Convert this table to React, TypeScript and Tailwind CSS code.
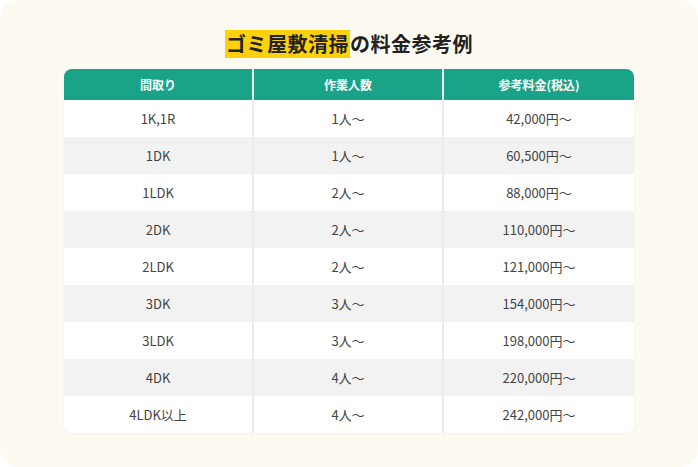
import React from "react";

const rows: [string, string, string][] = [
  ["1K,1R", "1人〜", "42,000円〜"],
  ["1DK", "1人〜", "60,500円〜"],
  ["1LDK", "2人〜", "88,000円〜"],
  ["2DK", "2人〜", "110,000円〜"],
  ["2LDK", "2人〜", "121,000円〜"],
  ["3DK", "3人〜", "154,000円〜"],
  ["3LDK", "3人〜", "198,000円〜"],
  ["4DK", "4人〜", "220,000円〜"],
  ["4LDK以上", "4人〜", "242,000円〜"],
];

export default function App() {
  return (
    <div
      className="w-[698px] h-[467px] bg-white"
      style={{ fontFamily: '"Noto Sans CJK JP", "Noto Sans", sans-serif' }}
    >
      <div className="w-full h-full rounded-[18px] bg-[#fdfaf2] flex flex-col items-center pt-[30px]">
        <h2 className="h-[28px] flex items-center text-[20px] font-bold text-[#222] leading-none tracking-[0.5px]">
          <span className="bg-[#ffd10a] h-[28px] flex items-center px-[1px]">ゴミ屋敷清掃</span>
          <span>の料金参考例</span>
        </h2>
        <div className="mt-[11px] w-[570px] rounded-[8px] overflow-hidden bg-white shadow-[0_1px_3px_rgba(0,0,0,0.04)]">
          <div className="grid grid-cols-3 h-[31px] bg-[#19a48a] text-white text-[12px] font-bold">
            <div className="flex items-center justify-center border-r-[2px] border-[#e8f3ef]">間取り</div>
            <div className="flex items-center justify-center border-r-[2px] border-[#e8f3ef]">作業人数</div>
            <div className="flex items-center justify-center">参考料金(税込)</div>
          </div>
          {rows.map((r, i) => (
            <div
              key={i}
              className={`grid grid-cols-3 h-[37px] text-[13px] text-[#444] ${i % 2 === 1 ? "bg-[#f2f2f2]" : "bg-white"}`}
            >
              <div className="flex items-center justify-center border-r-[2px] border-[#ebebeb]">{r[0]}</div>
              <div className="flex items-center justify-center border-r-[2px] border-[#ebebeb]">{r[1]}</div>
              <div className="flex items-center justify-center">{r[2]}</div>
            </div>
          ))}
        </div>
      </div>
    </div>
  );
}
